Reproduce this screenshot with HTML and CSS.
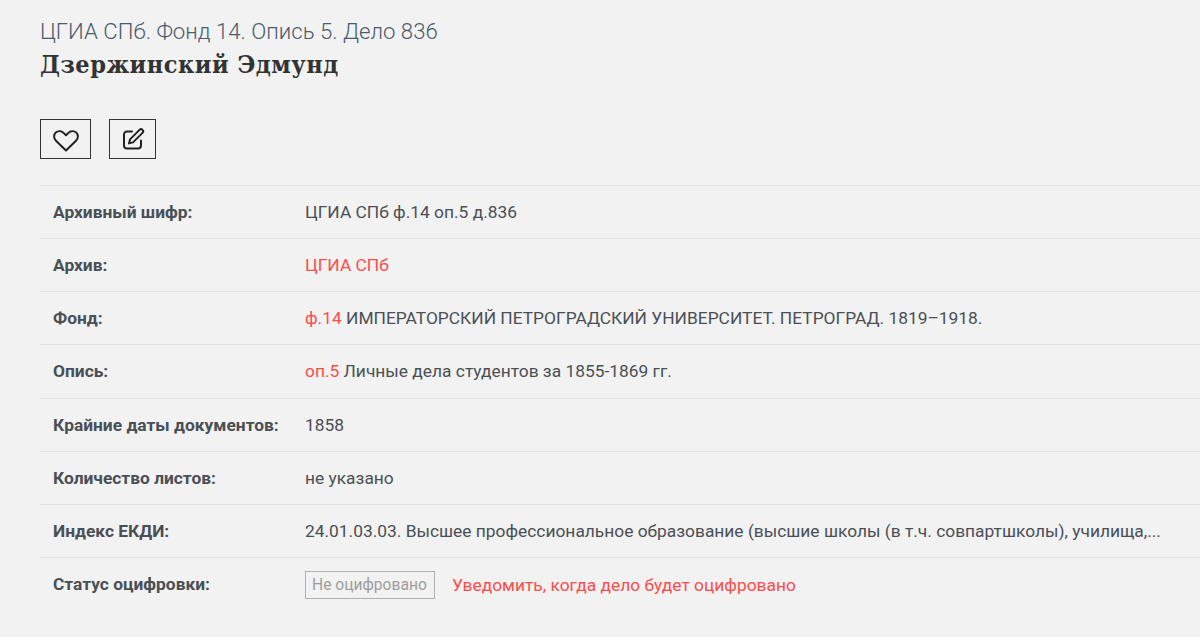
FILE: index.html
```html
<!DOCTYPE html>
<html lang="ru">
<head>
<meta charset="utf-8">
<title>Дзержинский Эдмунд</title>
<link rel="stylesheet" href="styles.css">
</head>
<body>
<main class="page">
  <p class="subtitle">ЦГИА СПб. Фонд 14. Опись 5. Дело 836</p>
  <h1 class="title">Дзержинский Эдмунд</h1>
  <div class="actions">
    <button class="btn btn-fav" type="button" aria-label="В избранное">
      <svg class="icon-heart" width="26" height="22" viewBox="0 0 26 22" fill="none" stroke="currentColor" stroke-width="2" stroke-linejoin="round"><path d="M13 20.5 3 10.8C.5 8.3.5 4.6 2.8 2.6 5.1.6 8.5.9 10.8 3.1L13 5.3l2.2-2.2c2.3-2.2 5.7-2.5 8-.5 2.3 2 2.3 5.7-.2 8.2z"/></svg>
    </button>
    <button class="btn btn-edit" type="button" aria-label="Редактировать">
      <svg width="24" height="24" viewBox="0 0 24 24" fill="none" stroke="currentColor" stroke-width="2" stroke-linecap="round" stroke-linejoin="round"><path d="M11 4.5H6a3 3 0 0 0-3 3v11a3 3 0 0 0 3 3h11a3 3 0 0 0 3-3v-5"/><path d="M18.5 2.9a2.1 2.1 0 0 1 3 3L12 15.4l-4 1 1-4z"/></svg>
    </button>
  </div>
  <dl class="info">
    <div class="row"><dt>Архивный шифр:</dt><dd>ЦГИА СПб ф.14 оп.5 д.836</dd></div>
    <div class="row"><dt>Архив:</dt><dd><a href="#">ЦГИА СПб</a></dd></div>
    <div class="row"><dt>Фонд:</dt><dd><a href="#">ф.14</a> ИМПЕРАТОРСКИЙ ПЕТРОГРАДСКИЙ УНИВЕРСИТЕТ. ПЕТРОГРАД. 1819–1918.</dd></div>
    <div class="row"><dt>Опись:</dt><dd><a href="#">оп.5</a> Личные дела студентов за 1855-1869 гг.</dd></div>
    <div class="row"><dt>Крайние даты документов:</dt><dd>1858</dd></div>
    <div class="row"><dt>Количество листов:</dt><dd>не указано</dd></div>
    <div class="row"><dt>Индекс ЕКДИ:</dt><dd>24.01.03.03. Высшее профессиональное образование (высшие школы (в т.ч. совпартшколы), училища,...</dd></div>
    <div class="row"><dt>Статус оцифровки:</dt><dd class="status"><span class="badge">Не оцифровано</span><a href="#" class="notify">Уведомить, когда дело будет оцифровано</a></dd></div>
  </dl>
</main>
</body>
</html>
```
FILE: styles.css
```css
* { box-sizing: border-box; }
html, body { margin: 0; height: 100%; }
body {
  background: #f2f2f2;
  color: #4a4f55;
  font-family: Roboto, "Liberation Sans", sans-serif;
  font-size: 17.38px;
  overflow: hidden;
}
.page { padding: 17px 0 0 40px; }
.subtitle {
  margin: 0;
  font-size: 22.2px;
  font-weight: 300;
  line-height: 28px;
  color: #4c5a6b;
}
.title {
  margin: 3px 0 0;
  font-family: "DejaVu Serif Condensed", "DejaVu Serif", serif;
  font-size: 25px;
  font-weight: 700;
  letter-spacing: 0.5px;
  line-height: 34px;
  color: #333;
}
.actions { display: flex; gap: 18px; margin-top: 37px; }
.btn {
  display: flex;
  align-items: center;
  justify-content: center;
  height: 40px;
  padding: 0;
  background: transparent;
  border: 1px solid #333;
  color: #222;
}
.btn-fav { width: 51px; }
.btn-edit { width: 47px; }
.icon-heart { margin-top: 3px; }
.info { margin: 26px 0 0; border-top: 1px solid #e3e3e3; }
.row {
  display: flex;
  align-items: center;
  height: 53.14px;
  padding-left: 13px;
  border-bottom: 1px solid #e3e3e3;
}
.row:last-child { border-bottom: 0; }
dt { width: 252px; font-weight: 700; }
dd { margin: 0; }
a { color: #ff4b4b; text-decoration: none; }
.status { display: flex; align-items: center; padding-top: 2px; }
.badge {
  padding: 3px 7px 3px 6px;
  border: 1px solid #b0b0b0;
  color: #9e9e9e;
  font-size: 15.64px;
  line-height: 20px;
}
.notify { margin-left: 17px; }
```
